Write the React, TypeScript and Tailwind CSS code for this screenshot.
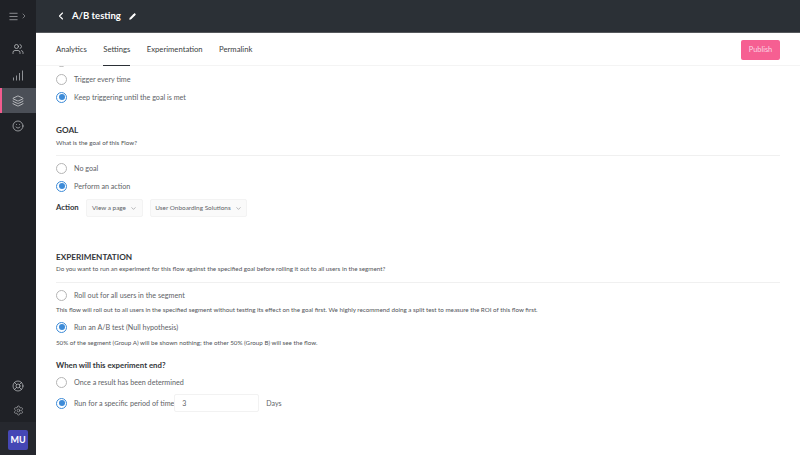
import { ChevronLeft, ChevronDown, ChevronRight, Pencil, Users, Layers, Smile, LifeBuoy, Settings, Menu } from "lucide-react";

function Radio({ on, label }: { on?: boolean; label: string }) {
  return (
    <div className="flex h-[12px] items-center gap-[7px]">
      {on ? (
        <span className="flex h-[11px] w-[11px] shrink-0 items-center justify-center rounded-full border-[1.5px] border-[#3d8bd8]">
          <span className="h-[6px] w-[6px] rounded-full bg-[#3d8bd8]" />
        </span>
      ) : (
        <span className="h-[11px] w-[11px] shrink-0 rounded-full border border-[#b5b5b5] bg-white" />
      )}
      <span className="mt-[2px] whitespace-nowrap text-[7.2px] leading-[12px] text-[#606367]">{label}</span>
    </div>
  );
}

function Select({ label, w }: { label: string; w: string }) {
  return (
    <div className={`flex h-[18px] items-center justify-center gap-[4px] whitespace-nowrap rounded-[2px] border border-[#f3f3f3] bg-[#fafafa] text-[6.4px] text-[#606367] ${w}`}>
      {label}
      <ChevronDown size={7} strokeWidth={1.5} />
    </div>
  );
}

function Bars() {
  return (
    <svg width="12" height="11" viewBox="0 0 12 11" stroke="#8f9296" strokeWidth="1" fill="none">
      <path d="M1.5 10.5V7.5M4.5 10.5V5.5M7.5 10.5V3M10.5 10.5V0.5" />
    </svg>
  );
}

export default function App() {
  return (
    <div className="flex h-[455px] w-[800px] overflow-hidden bg-white font-['Lato','Noto_Sans',sans-serif]">
      <aside className="flex w-[36px] shrink-0 flex-col bg-[#1f2126] text-[#c3c5c8]">
        <div className="flex h-[32px] items-center justify-center gap-[1px]">
          <Menu size={11} strokeWidth={1.4} />
          <ChevronRight size={8} strokeWidth={1.6} />
        </div>
        <div className="mt-[1px] flex h-[31px] items-center justify-center"><Users size={12} strokeWidth={1.5} /></div>
        <div className="flex h-[23px] items-center justify-center"><Bars /></div>
        <div className="mt-[1px] flex h-[25px] items-center justify-center border-l-2 border-[#f25c8f] bg-[#4b4f57] pr-[2px] text-[#d8dadc]"><Layers size={12} strokeWidth={1.5} /></div>
        <div className="flex h-[25px] items-center justify-center"><Smile size={12} strokeWidth={1.4} /></div>
        <div className="flex-1" />
        <div className="flex h-[25px] items-center justify-center"><LifeBuoy size={12} strokeWidth={1.4} /></div>
        <div className="flex h-[24px] items-center justify-center"><Settings size={11} strokeWidth={1.2} /></div>
        <div className="flex h-[33px] items-center justify-center bg-[#26282e] pt-[2px]">
          <div className="flex h-[20px] w-[20px] items-center justify-center rounded-[2px] bg-[#4547b5] text-[9px] font-bold text-white">MU</div>
        </div>
      </aside>
      <main className="flex min-w-0 flex-1 flex-col">
        <header className="flex h-[33px] shrink-0 items-center border-b border-[#55585c] bg-[#2b3036] pl-[19px] text-white">
          <ChevronLeft size={12} strokeWidth={2.2} />
          <span className="ml-[5px] text-[9.5px] font-bold">A/B testing</span>
          <Pencil size={7} strokeWidth={2} className="ml-[8px]" fill="white" />
        </header>
        <div className="flex h-[33px] shrink-0 items-start justify-between border-b border-[#f4f4f4] pl-[20px] pr-[20px]">
          <nav className="flex gap-[16.5px] text-[7.7px] text-[#3b3e42]">
            <span className="flex h-[33px] items-center">Analytics</span>
            <span className="flex h-[33px] items-center border-b border-[#2b3036] pt-px">Settings</span>
            <span className="flex h-[33px] items-center">Experimentation</span>
            <span className="flex h-[33px] items-center">Permalink</span>
          </nav>
          <button className="mt-[7px] flex h-[20px] w-[39px] items-center justify-center rounded-[2px] bg-[#f65f92] text-[7.4px] text-[#fbd5e2]">Publish</button>
        </div>
        <div className="min-h-0 flex-1 overflow-hidden pl-[20px] pr-[20px]">
          <div className="mt-[-11px] flex flex-col gap-[6px]">
            <Radio label="Trigger once" />
            <Radio label="Trigger every time" />
            <Radio on label="Keep triggering until the goal is met" />
          </div>
          <h2 className="mt-[21px] text-[8.2px] font-bold leading-[12px] text-[#33363a]">GOAL</h2>
          <p className="mt-[2px] text-[6.25px] leading-[10px] text-[#505357]">What is the goal of this Flow?</p>
          <div className="mt-[7px] h-px bg-[#f0f0f0]" />
          <div className="mt-[6px] flex flex-col gap-[6px]">
            <Radio label="No goal" />
            <Radio on label="Perform an action" />
          </div>
          <div className="mt-[7px] flex items-center">
            <span className="w-[30px] text-[7.7px] font-bold text-[#33363a]">Action</span>
            <Select label="View a page" w="w-[57px]" />
            <Select label="User Onboarding Solutions" w="ml-[7px] w-[97px]" />
          </div>
          <h2 className="mt-[34px] text-[8.2px] font-bold leading-[12px] text-[#33363a]">EXPERIMENTATION</h2>
          <p className="mt-[1px] text-[6.25px] leading-[10px] text-[#505357]">Do you want to run an experiment for this flow against the specified goal before rolling it out to all users in the segment?</p>
          <div className="mt-[8px] h-px bg-[#f0f0f0]" />
          <div className="mt-[6px]"><Radio label="Roll out for all users in the segment" /></div>
          <p className="mt-[4px] text-[6.25px] leading-[10px] text-[#505357]">This flow will roll out to all users in the specified segment without testing its effect on the goal first. We highly recommend doing a split test to measure the ROI of this flow first.</p>
          <div className="mt-[6px]"><Radio on label="Run an A/B test (Null hypothesis)" /></div>
          <p className="mt-[5px] text-[6.25px] leading-[10px] text-[#505357]">50% of the segment (Group A) will be shown nothing; the other 50% (Group B) will see the flow.</p>
          <h3 className="mt-[11px] text-[7.8px] font-bold leading-[12px] text-[#33363a]">When will this experiment end?</h3>
          <div className="mt-[5px]"><Radio label="Once a result has been determined" /></div>
          <div className="mt-[6px] flex items-center">
            <Radio on label="Run for a specific period of time" />
            <div className="flex h-[18px] w-[85px] items-center rounded-[2px] border border-[#f2f2f2] pl-[7px] text-[7px] text-[#606367]">3</div>
            <span className="ml-[7px] text-[7px] text-[#606367]">Days</span>
          </div>
        </div>
      </main>
    </div>
  );
}
